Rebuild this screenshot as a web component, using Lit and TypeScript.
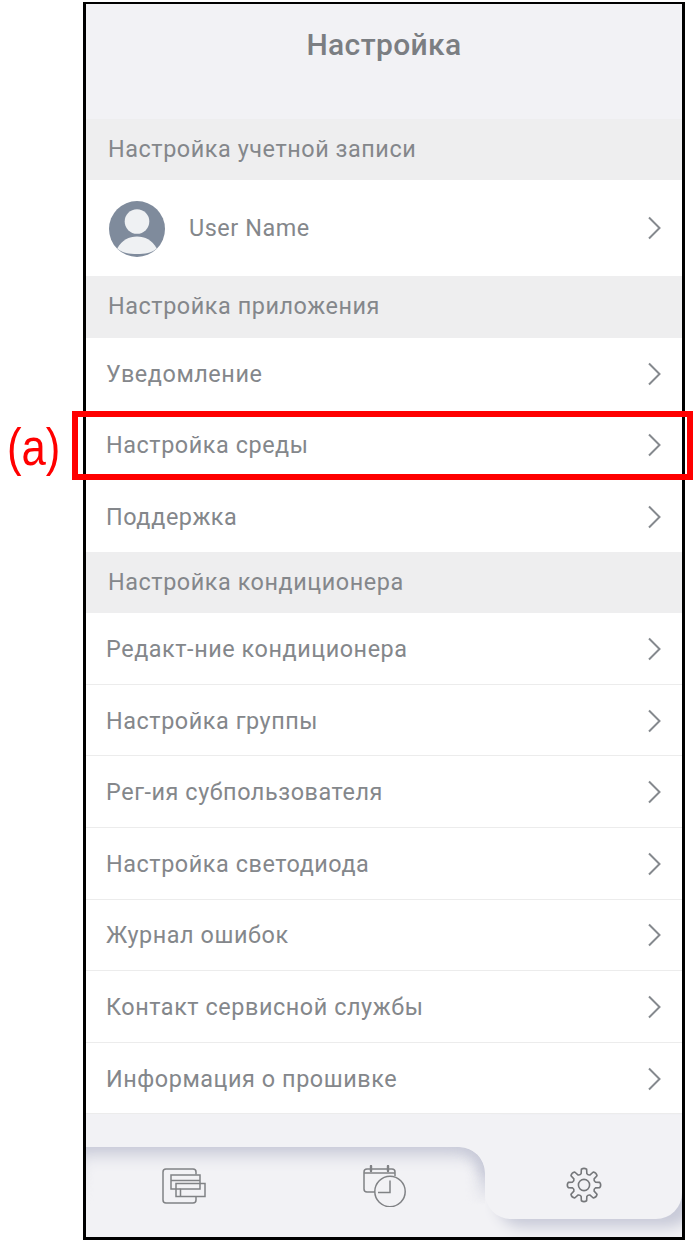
import { LitElement, html, css, svg } from "lit";
import { customElement } from "lit/decorators.js";

function gearPath(cx: number, cy: number): string {
  const teeth = 8;
  const outer = 16, inner = 11.8;
  const w = Math.PI / teeth;
  const pt = (r: number, a: number) => `${(cx + r * Math.sin(a)).toFixed(2)} ${(cy - r * Math.cos(a)).toFixed(2)}`;
  let d = "";
  for (let i = 0; i < teeth; i++) {
    const a = (i * 2 * Math.PI) / teeth;
    const p0 = pt(inner, a - w * 0.62);
    const p1 = pt(outer, a - w * 0.42);
    const p2 = pt(outer, a + w * 0.42);
    const p3 = pt(inner, a + w * 0.62);
    const pc = pt(outer + 1.6, a);
    d += i === 0 ? `M${p0}` : `Q${pt(inner - 1.4, a - w)} ${p0}`;
    d += `L${p1}Q${pc} ${p2}L${p3}`;
  }
  d += `Q${pt(inner - 1.4, -w)} ${pt(inner, -w * 0.62)}Z`;
  return d;
}

const chevron = html`<svg class="chev" width="14" height="24" viewBox="0 0 14 24"><path d="M2 1.5 L12.5 12 L2 22.5" fill="none" stroke="#85898e" stroke-width="2"/></svg>`;

const avatar = html`<svg class="avatar" width="56" height="56" viewBox="0 0 56 56">
  <circle cx="28" cy="28" r="28" fill="#7f8b9c"/>
  <circle cx="28" cy="20.5" r="12.3" fill="#eff1f3"/>
  <path d="M8.2 47.5 C13 39 20 35.5 28 35.5 C36 35.5 43 39 47.8 47.5 C42.8 52 35.8 53 28 53 C20.2 53 13.2 52 8.2 47.5 Z" fill="#eff1f3"/>
</svg>`;

const iconUnits = html`<svg class="units" width="44" height="36" viewBox="0 0 44 36" fill="none" stroke="#808285" stroke-width="1.5">
  <path d="M34 28.5 V32 Q34 35 31 35 H4 Q1 35 1 32 V4 Q1 1 4 1 H31 Q34 1 34 4 V6.5"/>
  <rect x="9" y="7" width="29" height="14"/>
  <path d="M9 12.5 H38"/>
  <rect x="14" y="15.5" width="29" height="13" fill="#f2f2f5"/>
  <path d="M18.5 28 V21 H38 V15.5" />
  <path d="M14 21 H18.5"/>
</svg>`;

const iconSchedule = html`<svg class="sched" width="44" height="42" viewBox="0 0 44 42" fill="none" stroke="#808285" stroke-width="1.5">
  <path d="M12 27 H4 Q1 27 1 24 V7 Q1 4 4 4 H29 Q32 4 32 7 V11"/>
  <path d="M1 8 H32" stroke-width="1.5"/>
  <path d="M8 1 V6 M25 1 V6" stroke-width="2.4" stroke-linecap="round"/>
  <circle cx="27" cy="26.5" r="15.2" fill="#f2f2f5"/>
  <path d="M27 15.5 V27.5 H15"/>
</svg>`;

const iconGear = svg`<svg width="38" height="38" viewBox="0 0 38 38" fill="none" stroke="#75777a" stroke-width="1.6">
  <path d="${gearPath(19, 19)}" stroke-linejoin="round"/>
  <circle cx="19" cy="19" r="5.6"/>
</svg>`;

@customElement("app-root")
export class AppRoot extends LitElement {
  static styles = css`
    :host {
      display: block;
      width: 696px;
      height: 1243px;
      position: relative;
      background: #fff;
      font-family: Roboto, "Noto Sans", sans-serif;
      color: #84878b;
      overflow: hidden;
      padding: 2px 0 0 83px;
      box-sizing: border-box;
    }
    .frame {
      width: 602px;
      height: 1237.5px;
      border: 3px solid #000;
      border-top-width: 2.5px;
      box-sizing: border-box;
      background: #f2f2f5;
      display: flex;
      flex-direction: column;
    }
    .head {
      height: 114.5px;
      padding-top: 18px;
      box-sizing: border-box;
      text-align: center;
      font-size: 30px;
      line-height: 46px;
      font-weight: 500;
      color: #7b7e82;
      letter-spacing: 0.38px;
      flex: none;
    }
    .section {
      background: #eeeeef;
      padding-left: 22px;
      display: flex;
      align-items: center;
      font-size: 23.4px;
      letter-spacing: 0.56px;
      flex: none;
      height: 61px;
      padding-bottom: 1px;
      box-sizing: border-box;
    }
    .section.tall { height: 62px; padding-bottom: 2px; }
    .list { background: #fff; flex: none; }
    .row {
      height: 71.6px;
      display: flex;
      align-items: center;
      justify-content: space-between;
      padding: 1px 21px 0 20px;
      box-sizing: border-box;
      font-size: 23.4px;
      letter-spacing: 0.56px;
      border-bottom: 1px solid #ececec;
    }
    .row.plain { border-bottom: none; }
    .user {
      height: 96px;
      background: #fff;
      display: flex;
      align-items: center;
      padding: 0 21px 0 23px;
      font-size: 23.4px;
      letter-spacing: 0.56px;
      box-sizing: border-box;
      flex: none;
    }
    .user .avatar { margin-right: 24px; margin-top: 2px; }
    .user .chev { margin-left: auto; }
    .chev { flex: none; }
    .bottom {
      flex: 1;
      display: flex;
      align-items: stretch;
      min-height: 0;
      overflow: hidden;
    }
    .left {
      flex: none;
      width: 399px;
      margin-top: 32.5px;
      display: flex;
      position: relative;
    }
    .left::before {
      content: "";
      position: absolute;
      inset: 0 0 0 0;
      border-top-right-radius: 26px;
      box-shadow: inset 0 16px 16px -8px #c8cad8, inset -12px 0 14px -6px #c8cad8;
      -webkit-mask-image: linear-gradient(to bottom, #000 0, #000 24px, transparent 58px);
      mask-image: linear-gradient(to bottom, #000 0, #000 24px, transparent 58px);
    }
    .tab {
      width: 199.5px;
      display: flex;
      justify-content: center;
      padding-top: 18px;
      box-sizing: border-box;
      position: relative;
    }
    .units { margin: 3px 3px 0 0; }
    .right {
      flex: 1;
      height: 104.5px;
      border-radius: 0 0 26px 26px;
      background: #f2f2f5;
      box-shadow: 12px 8px 14px 0 #c8cad8;
      display: flex;
      justify-content: center;
      padding-top: 52px;
      box-sizing: border-box;
      position: relative;
      z-index: 1;
      clip-path: inset(0 -30px -30px 0);
    }
    .box {
      position: absolute;
      left: 72px;
      top: 411px;
      width: 621px;
      height: 69px;
      border: 6px solid #ff0000;
      box-sizing: border-box;
    }
    .mark {
      position: absolute;
      left: 7px;
      top: 417px;
      font-family: "Liberation Sans", Arial, sans-serif;
      font-size: 52px;
      line-height: 60px;
      color: #f00;
      transform: scaleX(0.84);
      transform-origin: left center;
    }
  `;

  private row(label: string, plain = false) {
    return html`<div class="row ${plain ? "plain" : ""}"><span>${label}</span>${chevron}</div>`;
  }

  render() {
    return html`
      <div class="frame">
        <div class="head">Настройка</div>
        <div class="section">Настройка учетной записи</div>
        <div class="user">${avatar}<span>User Name</span>${chevron}</div>
        <div class="section tall">Настройка приложения</div>
        <div class="list">
          ${this.row("Уведомление", true)}
          ${this.row("Настройка среды", true)}
          ${this.row("Поддержка", true)}
        </div>
        <div class="section">Настройка кондиционера</div>
        <div class="list">
          ${["Редакт-ние кондиционера", "Настройка группы", "Рег-ия субпользователя", "Настройка светодиода", "Журнал ошибок", "Контакт сервисной службы", "Информация о прошивке"].map((t) => this.row(t))}
        </div>
        <div class="bottom">
          <div class="left">
            <div class="tab">${iconUnits}</div>
            <div class="tab">${iconSchedule}</div>
          </div>
          <div class="right">${iconGear}</div>
        </div>
      </div>
      <div class="box"></div>
      <div class="mark">(a)</div>
    `;
  }
}
